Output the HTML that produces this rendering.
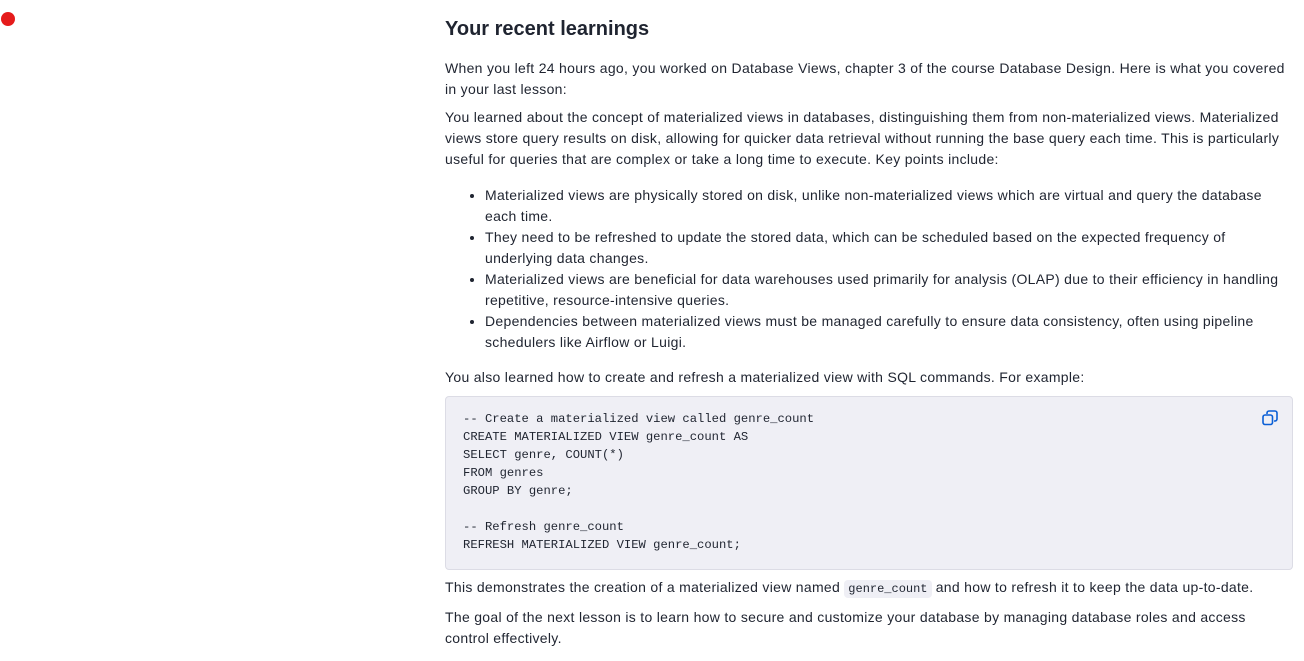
<!DOCTYPE html>
<html><head><meta charset="utf-8"><style>
body{margin:0;background:#fff;width:1304px;height:661px;overflow:hidden;font-family:"Liberation Sans",sans-serif;color:#1f2430;}
.dot{position:absolute;left:1px;top:12px;width:14px;height:14px;border-radius:50%;background:#e51b1b;}
.c{position:absolute;left:445px;top:0;width:848px;font-size:14px;line-height:21px;letter-spacing:0.3px;}
h2{font-size:20px;font-weight:bold;margin:16px 0 0;line-height:26px;color:#1f2430;letter-spacing:0;}
p{margin:0;white-space:nowrap;}
ul{margin:15px 0 0;padding-left:40px;}
li{white-space:nowrap;}
pre{margin:0;background:#efeff5;border:1px solid #dcdce5;border-radius:4px;height:151px;padding:13px 17px 8px;font-family:"Liberation Mono",monospace;font-size:12.2px;line-height:18px;color:#1f2430;position:relative;letter-spacing:0;}
.cp{position:absolute;right:14px;top:13px;}
code{font-family:"Liberation Mono",monospace;font-size:12px;background:#efeff5;border-radius:4px;padding:2px 4px;letter-spacing:0;}
</style></head><body>
<div class="dot"></div>
<div class="c">
<h2>Your recent learnings</h2>
<p style="margin-top:16px">When you left 24 hours ago, you worked on Database Views, chapter 3 of the course Database Design. Here is what you covered<br>in your last lesson:</p>
<p style="margin-top:7px">You learned about the concept of materialized views in databases, distinguishing them from non-materialized views. Materialized<br>views store query results on disk, allowing for quicker data retrieval without running the base query each time. This is particularly<br>useful for queries that are complex or take a long time to execute. Key points include:</p>
<ul>
<li>Materialized views are physically stored on disk, unlike non-materialized views which are virtual and query the database<br>each time.</li>
<li>They need to be refreshed to update the stored data, which can be scheduled based on the expected frequency of<br>underlying data changes.</li>
<li>Materialized views are beneficial for data warehouses used primarily for analysis (OLAP) due to their efficiency in handling<br>repetitive, resource-intensive queries.</li>
<li>Dependencies between materialized views must be managed carefully to ensure data consistency, often using pipeline<br>schedulers like Airflow or Luigi.</li>
</ul>
<p style="margin-top:14px">You also learned how to create and refresh a materialized view with SQL commands. For example:</p>
<pre style="margin-top:8px">-- Create a materialized view called genre_count
CREATE MATERIALIZED VIEW genre_count AS
SELECT genre, COUNT(*)
FROM genres
GROUP BY genre;

-- Refresh genre_count
REFRESH MATERIALIZED VIEW genre_count;<svg class="cp" width="16" height="16" viewBox="0 0 16 16" fill="none" stroke="#0a5fd6" stroke-width="1.6"><rect x="1" y="5" width="9.5" height="9.5" rx="2"/><path d="M5 4V3a2 2 0 0 1 2-2h6a2 2 0 0 1 2 2v6a2 2 0 0 1-2 2h-1"/></svg></pre>
<p style="margin-top:7px">This demonstrates the creation of a materialized view named <code>genre_count</code> and how to refresh it to keep the data up-to-date.</p>
<p style="margin-top:7px">The goal of the next lesson is to learn how to secure and customize your database by managing database roles and access<br>control effectively.</p>
</div>
</body></html>
